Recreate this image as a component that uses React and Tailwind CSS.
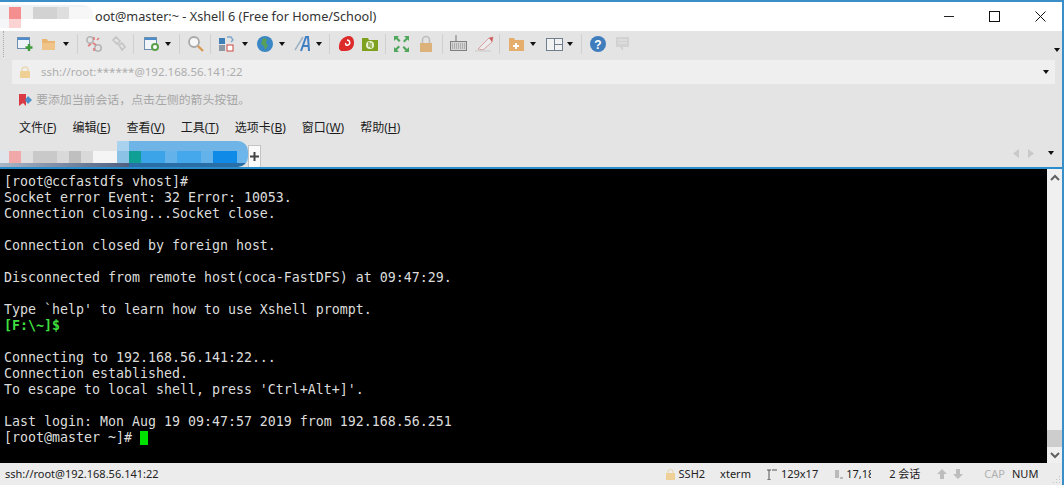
const uiFont = { fontFamily: '"Noto Sans", "Noto Sans CJK SC", sans-serif' };

const terminalLines = [
  "[root@ccfastdfs vhost]#",
  "Socket error Event: 32 Error: 10053.",
  "Connection closing...Socket close.",
  "",
  "Connection closed by foreign host.",
  "",
  "Disconnected from remote host(coca-FastDFS) at 09:47:29.",
  "",
  "Type `help' to learn how to use Xshell prompt.",
];

const terminalLines2 = [
  "",
  "Connecting to 192.168.56.141:22...",
  "Connection established.",
  "To escape to local shell, press 'Ctrl+Alt+]'.",
  "",
  "Last login: Mon Aug 19 09:47:57 2019 from 192.168.56.251",
];

const menus = [
  ["文件", "F"],
  ["编辑", "E"],
  ["查看", "V"],
  ["工具", "T"],
  ["选项卡", "B"],
  ["窗口", "W"],
  ["帮助", "H"],
];

function Arrow({ className = "" }) {
  return (
    <svg width="6" height="4" viewBox="0 0 6 4" className={className}>
      <path d="M0 0h6L3 4z" fill="#111" />
    </svg>
  );
}

function Sep({ className = "" }) {
  return <div className={`w-px h-[20px] bg-[#cfcfcf] ${className}`} />;
}

function Icon({ className = "", children, w = 16 }) {
  return (
    <svg width={w} height="18" viewBox={`0 0 ${w} 18`} className={`shrink-0 ${className}`}>
      {children}
    </svg>
  );
}

function Toolbar() {
  return (
    <div className="h-[26px] flex items-center bg-[#e4e4e4] relative">
      <div className="absolute left-[3px] top-0 bottom-0 w-px border-l border-dotted border-[#a8a8a8]" />
      {/* new session */}
      <Icon className="ml-[17px]">
        <rect x="0.5" y="2.5" width="12" height="11" fill="#eef3f8" stroke="#6f8fae" />
        <rect x="1" y="3" width="11" height="2" fill="#4d8ccc" />
        <path d="M12 9v7M8.5 12.5h7" stroke="#3d9a3d" strokeWidth="2.4" />
      </Icon>
      {/* open */}
      <Icon className="ml-[8px]">
        <path d="M1 4h5l1 2h7v9H1z" fill="#eab66f" />
        <path d="M1 8h13v7H1z" fill="#f0c488" />
      </Icon>
      <Arrow className="ml-[6px]" />
      <Sep className="ml-[8px]" />
      {/* disconnect */}
      <Icon className="ml-[7px]" w={18}>
        <circle cx="5" cy="5" r="3.2" fill="none" stroke="#b5b5b5" strokeWidth="1.6" />
        <circle cx="13" cy="13" r="3.2" fill="none" stroke="#b5b5b5" strokeWidth="1.6" />
        <path d="M9 2v3M12 5l2-2M3 11l3-2M9 13v3" stroke="#e27a7a" strokeWidth="1.6" />
        <path d="M8 8l3 2" stroke="#e27a7a" strokeWidth="1.6" />
      </Icon>
      {/* reconnect */}
      <Icon className="ml-[8px]" w={15}>
        <path d="M2 5l3-3 4 4-3 3zM8 10l3-2 3 4-3 3z" fill="none" stroke="#c4c4c4" strokeWidth="1.6" />
      </Icon>
      <Sep className="ml-[7px]" />
      {/* properties */}
      <Icon className="ml-[10px]">
        <rect x="0.5" y="2.5" width="12" height="12" fill="#f2f5f8" stroke="#6f8fae" />
        <rect x="1" y="3" width="11" height="2" fill="#4d8ccc" />
        <circle cx="11" cy="12" r="3" fill="#fff" stroke="#5aa04a" strokeWidth="2" />
      </Icon>
      <Arrow className="ml-[5px]" />
      <Sep className="ml-[8px]" />
      {/* find */}
      <Icon className="ml-[7px]" w={18}>
        <circle cx="7" cy="7" r="5" fill="#f6f6f6" stroke="#a9a9a9" strokeWidth="1.8" />
        <path d="M11 11l5 5" stroke="#d99a55" strokeWidth="2.4" />
      </Icon>
      <Sep className="ml-[5px]" />
      {/* layout */}
      <Icon className="ml-[8px]">
        <rect x="0" y="3" width="6" height="6" fill="#3f7fb8" />
        <rect x="0" y="10" width="6" height="6" fill="#8d98a5" />
        <rect x="8" y="10" width="6" height="6" fill="#fff" stroke="#c9473f" />
        <path d="M8 2h4l2 3-2 2" fill="none" stroke="#7fa8cc" strokeWidth="1.4" />
      </Icon>
      <Arrow className="ml-[7px]" />
      {/* globe */}
      <Icon className="ml-[9px]">
        <circle cx="8" cy="9" r="8" fill="#3b86c4" />
        <path d="M6 3l4 1-1 4 2 3-3 4-1-4-3-2z" fill="#58a058" />
      </Icon>
      <Arrow className="ml-[6px]" />
      {/* font */}
      <Icon className="ml-[9px]" w={18}>
        <path d="M1 15L9 2" stroke="#9fb3c6" strokeWidth="1.6" />
        <path d="M7 16l5-14h2l1 14M9 11h6" fill="none" stroke="#3f7fc4" strokeWidth="2" />
      </Icon>
      <Arrow className="ml-[4px]" />
      <Sep className="ml-[7px]" />
      {/* shell */}
      <Icon className="ml-[8px]">
        <path d="M1 14C0 6 6 1 11 1c4 0 5 4 5 7 0 5-4 8-8 8H3z" fill="#dd2a2a" />
        <path d="M9 5c3 0 4 4 1 5-2 1-3-1-2-2" fill="none" stroke="#fff" strokeWidth="1.4" />
      </Icon>
      {/* xftp */}
      <Icon className="ml-[8px]">
        <path d="M0 3h6l1 2h9v11H0z" fill="#7ea11f" />
        <circle cx="8" cy="10" r="4" fill="#e9f2d2" />
        <path d="M7 7v5M9 8v5" stroke="#6c8f1b" strokeWidth="1.2" />
      </Icon>
      <Sep className="ml-[7px]" />
      {/* full screen */}
      <Icon className="ml-[8px]" w={15}>
        <path d="M0 1h5L3.5 2.5l3 3-1.5 1.5-3-3L0 6zM15 1v5l-1.5-1.5-3 3L9 6l3-3L10 1zM0 17v-5l1.500 1.500 3-3L6 12l-3 3 2 2zM15 17h-5l1.500-1.500-3-3L10 11l3 3 2-2z" fill="#4fa65a" />
      </Icon>
      {/* lock */}
      <Icon className="ml-[10px]" w={14}>
        <path d="M3.500 8V5a3.500 3.500 0 0 1 7 0v3" fill="none" stroke="#bdbdbd" strokeWidth="1.6" />
        <rect x="1" y="8" width="12" height="9" fill="#dcb27a" />
      </Icon>
      <Sep className="ml-[9px]" />
      {/* keyboard */}
      <Icon className="ml-[7px]" w={17}>
        <path d="M6 0v6" stroke="#777" />
        <rect x="0.500" y="6.500" width="16" height="9" fill="#d4d4d4" stroke="#808080" />
        <path d="M2 9h13M2 11h13M2 13h13" stroke="#8a8a8a" strokeDasharray="1 1" />
      </Icon>
      {/* compose */}
      <Icon className="ml-[7px]" w={21}>
        <path d="M4 14L15 3l4-1-1 5-9 8z" fill="#ededed" stroke="#d8a0a0" />
        <path d="M15 3l4-1-1 5z" fill="#cf5d5d" />
        <path d="M1 16h16" stroke="#c9c9c9" />
      </Icon>
      <Sep className="ml-[4px]" />
      {/* new tab group */}
      <Icon className="ml-[9px]" w={15}>
        <path d="M0 3h5l1 2h9v11H0z" fill="#e6ae6d" />
        <path d="M7 8v6M4 11h6" stroke="#fff" strokeWidth="2" />
      </Icon>
      <Arrow className="ml-[6px]" />
      {/* tile */}
      <Icon className="ml-[10px]" w={17}>
        <rect x="0.500" y="3.500" width="16" height="12" fill="#f2f2f2" stroke="#6f7f8f" />
        <path d="M8.500 3.500v12M8.500 9.500h8" stroke="#6f7f8f" />
      </Icon>
      <Arrow className="ml-[4px]" />
      <Sep className="ml-[8px]" />
      {/* help */}
      <Icon className="ml-[8px]">
        <circle cx="8" cy="9" r="8" fill="#3f7dbd" />
        <text x="8" y="13.500" textAnchor="middle" fontSize="12" fontWeight="700" fill="#fff" fontFamily="Liberation Sans, sans-serif">?</text>
      </Icon>
      {/* chat */}
      <Icon className="ml-[9px]" w={15}>
        <path d="M1 2h13v10H8v4l-3-4H1z" fill="#d2d2d2" />
        <path d="M3 5h9M3 8h9" stroke="#e6e6e6" />
      </Icon>
      <Arrow className="ml-auto mr-[2px] self-end mb-[5px]" />
    </div>
  );
}

function AddressBar() {
  return (
    <div className="h-[30px] pt-[3px] pl-[12px] pr-[7px] bg-[#e4e4e4]">
      <div className="h-[24px] bg-[#efefef] flex items-center pl-[7px] pr-[6px]">
        <svg width="12" height="12" viewBox="0 0 12 12">
          <path d="M3 6V4a3 3 0 0 1 6 0v2" fill="none" stroke="#ead9b5" strokeWidth="1.500" />
          <rect x="1" y="5" width="10" height="7" rx="1" fill="#f0cf94" />
        </svg>
        <span className="ml-[10px] text-[11.5px] text-[#adadad]">ssh://root:******@192.168.56.141:22</span>
        <Arrow className="ml-auto" />
      </div>
    </div>
  );
}

function LinksBar() {
  return (
    <div className="h-[28px] bg-[#e4e4e4] flex items-center pl-[19px] pb-[2px]">
      <svg width="13" height="14" viewBox="0 0 13 14">
        <path d="M0 1h7v12L4 10l-4 3z" fill="#d93a44" />
        <path d="M6 7l3-4 4 4-4 4z" fill="#4d8fc7" />
      </svg>
      <span className="ml-[4px] text-[11.9px] text-[#a6a6a6]">要添加当前会话，点击左侧的箭头按钮。</span>
    </div>
  );
}

function MenuBar() {
  return (
    <div className="h-[26px] bg-[#e4e4e4] flex items-center pl-[19px] gap-[16px] text-[12px] text-[#1c1c1c]">
      {menus.map(([name, key]) => (
        <span key={key}>
          {name}(<span className="underline">{key}</span>)
        </span>
      ))}
    </div>
  );
}

function TabStrip() {
  return (
    <div className="h-[26px] bg-[#e4e4e4] flex items-end relative">
      <div className="flex h-[26px] w-[129px] flex-col">
        <div className="h-[10px] flex justify-end">
          <div className="w-[12px] bg-[#a9d2ee]" />
        </div>
        <div className="flex h-[12px]">
          <div className="w-[9px] bg-[#dfe5ea]" />
          <div className="w-[12px] bg-[#f0a8a8]" />
          <div className="w-[12px] bg-[#dfdfdf]" />
          <div className="w-[24px] bg-[#c9c9c9]" />
          <div className="w-[12px] bg-[#d9d9d9]" />
          <div className="w-[12px] bg-[#bfbfbf]" />
          <div className="w-[12px] bg-[#d9d9d9]" />
          <div className="w-[24px] bg-[#f5f5f5]" />
          <div className="w-[12px] bg-[#8cc2e6]" />
        </div>
        <div className="h-[4px] bg-gradient-to-r from-[#a9b6c6] to-[#4f5f80]" />
      </div>
      <div className="flex h-[26px] w-[119px] flex-col rounded-r-[10px] overflow-hidden">
        <div className="h-[10px] bg-[#6fb4e6]" />
        <div className="flex h-[12px]">
          <div className="w-[12px] bg-[#0f9f94]" />
          <div className="w-[24px] bg-[#3ba3e8]" />
          <div className="w-[12px] bg-[#63b3ea]" />
          <div className="w-[24px] bg-[#46a8ec]" />
          <div className="w-[12px] bg-[#63b3ea]" />
          <div className="w-[24px] bg-[#0f8ae6]" />
          <div className="w-[11px] bg-[#6cb6ec]" />
        </div>
        <div className="h-[4px] bg-[#2a6ea8]" />
      </div>
      <div className="w-[13px] h-[22px] bg-[#fafafa] border border-[#c4c4c4] border-b-0 flex items-center justify-center">
        <svg width="9" height="9" viewBox="0 0 9 9">
          <path d="M4.500 0v9M0 4.500h9" stroke="#444" strokeWidth="2" />
        </svg>
      </div>
      <div className="ml-auto flex items-center h-[26px] pr-[8px] gap-[9px] pb-[2px]">
        <svg width="6" height="9" viewBox="0 0 6 9"><path d="M6 0v9L0 4.500z" fill="#c9c9c9" /></svg>
        <svg width="6" height="9" viewBox="0 0 6 9"><path d="M0 0v9l6-4.500z" fill="#c9c9c9" /></svg>
        <Arrow className="ml-[5px]" />
      </div>
    </div>
  );
}

function Terminal() {
  const mono = { fontFamily: '"DejaVu Sans Mono", monospace' };
  return (
    <div className="h-[294px] flex bg-black">
      <div className="flex-1 pt-[5px] pl-[4px] text-[13.29px] leading-[16px] text-[#dcdcdc] whitespace-pre" style={mono}>
        {terminalLines.map((l, i) => (
          <div key={i} className="h-[16px]">{l}</div>
        ))}
        <div className="h-[16px] font-bold text-[#3fe03f]">[F:\~]$</div>
        {terminalLines2.map((l, i) => (
          <div key={i} className="h-[16px]">{l}</div>
        ))}
        <div className="h-[16px] flex items-center">
          <span>[root@master ~]# </span>
          <span className="w-[8px] h-[14px] bg-[#00e000]" />
        </div>
      </div>
      <div className="w-[15px] bg-[#f0f0f0] flex flex-col items-center justify-between">
        <svg width="10" height="16" viewBox="0 0 10 16" className="mt-[1px]">
          <path d="M1 10l4-4 4 4" fill="none" stroke="#606060" strokeWidth="2" />
        </svg>
        <div className="flex flex-col w-full items-center">
          <div className="w-full h-[17px] bg-[#cdcdcd]" />
          <svg width="10" height="16" viewBox="0 0 10 16">
            <path d="M1 6l4 4 4-4" fill="none" stroke="#606060" strokeWidth="2" />
          </svg>
        </div>
      </div>
    </div>
  );
}

function StatusBar() {
  return (
    <div className="h-[22px] bg-[#ececec] flex items-center text-[11px] text-[#222] relative">
      <span className="ml-[5px]">ssh://root@192.168.56.141:22</span>
      <svg width="11" height="12" viewBox="0 0 11 12" className="absolute left-[665px] top-[5px]">
        <path d="M3 6V4a2.500 2.500 0 0 1 5 0v2" fill="none" stroke="#e6d8b8" strokeWidth="1.200" />
        <rect x="1" y="5" width="9" height="7" fill="#efd096" />
      </svg>
      <span className="ml-[518px] pl-[2px]">SSH2</span>
      <span className="ml-[15px]">xterm</span>
      <svg width="10" height="11" viewBox="0 0 10 11" className="ml-[16px]">
        <path d="M2 1v10M0 1h4M0 11h4M5 1h5" stroke="#555" fill="none" />
      </svg>
      <span className="ml-[4px]">129x17</span>
      <svg width="8" height="9" viewBox="0 0 8 9" className="ml-[17px]">
        <path d="M1 0v8M3 0v8M5 8h3" stroke="#888" fill="none" />
      </svg>
      <span className="ml-[3px] w-[25px] overflow-hidden whitespace-nowrap">17,18</span>
      <span className="ml-[18px]">2 会话</span>
      <svg width="12" height="10" viewBox="0 0 12 10" className="ml-[16px]">
        <path d="M6 0l5 5H8v5H4V5H1z" fill="#bdbdbd" />
      </svg>
      <svg width="12" height="10" viewBox="0 0 12 10" className="ml-[4px]">
        <path d="M6 10l5-5H8V0H4v5H1z" fill="#bdbdbd" />
      </svg>
      <span className="ml-[20px] text-[#b0b0b0]">CAP</span>
      <span className="ml-[7px]">NUM</span>
      <svg width="9" height="9" viewBox="0 0 9 9" className="absolute right-[1px] bottom-[1px]">
        <path d="M7 1h1v1H7zM4 4h1v1H4zM7 4h1v1H7zM1 7h1v1H1zM4 7h1v1H4zM7 7h1v1H7z" fill="#c4c4c4" />
      </svg>
    </div>
  );
}

export default function App() {
  return (
    <div className="w-[1064px] h-[485px] overflow-hidden flex flex-col bg-[#e4e4e4] border-r-2 border-[#3a8fc9]" style={uiFont}>
      {/* TITLE */}
      <div className="h-[31px] bg-white border-t-2 border-[#3a8fc9] flex items-center relative">
        <div className="w-[93px] h-[23px] flex flex-col bg-[#eef2f5] rounded-r-[10px] overflow-hidden">
          <div className="h-[2px]" />
          <div className="flex h-[12px]">
            <div className="w-[9px] bg-[#eef0f2]" />
            <div className="w-[12px] bg-[#f58f8f]" />
            <div className="w-[12px] bg-[#f1f1f1]" />
            <div className="w-[24px] bg-[#d2d2d2]" />
            <div className="w-[12px] bg-[#dedede]" />
            <div className="w-[24px] bg-[#f7f7f7]" />
          </div>
          <div className="flex flex-1 bg-white">
            <div className="w-[9px] bg-[#f4f6f8]" />
            <div className="w-[12px] bg-[#fbd3d3]" />
          </div>
        </div>
        <span className="ml-[2px] text-[12.7px] text-[#333]">oot@master:~ - Xshell 6 (Free for Home/School)</span>
        <div className="ml-auto flex items-center gap-[35px] pr-[16px]">
          <div className="w-[10px] h-px bg-[#222]" />
          <div className="w-[11px] h-[11px] border border-[#111]" />
          <svg width="11" height="11" viewBox="0 0 11 11">
            <path d="M0.500 0.500l10 10M10.500 0.500l-10 10" stroke="#111" />
          </svg>
        </div>
      </div>
      <Toolbar />
      <AddressBar />
      <LinksBar />
      <MenuBar />
      <TabStrip />
      <div className="h-[2px] bg-[#2b8ccb]" />
      <Terminal />
      <StatusBar />
    </div>
  );
}
